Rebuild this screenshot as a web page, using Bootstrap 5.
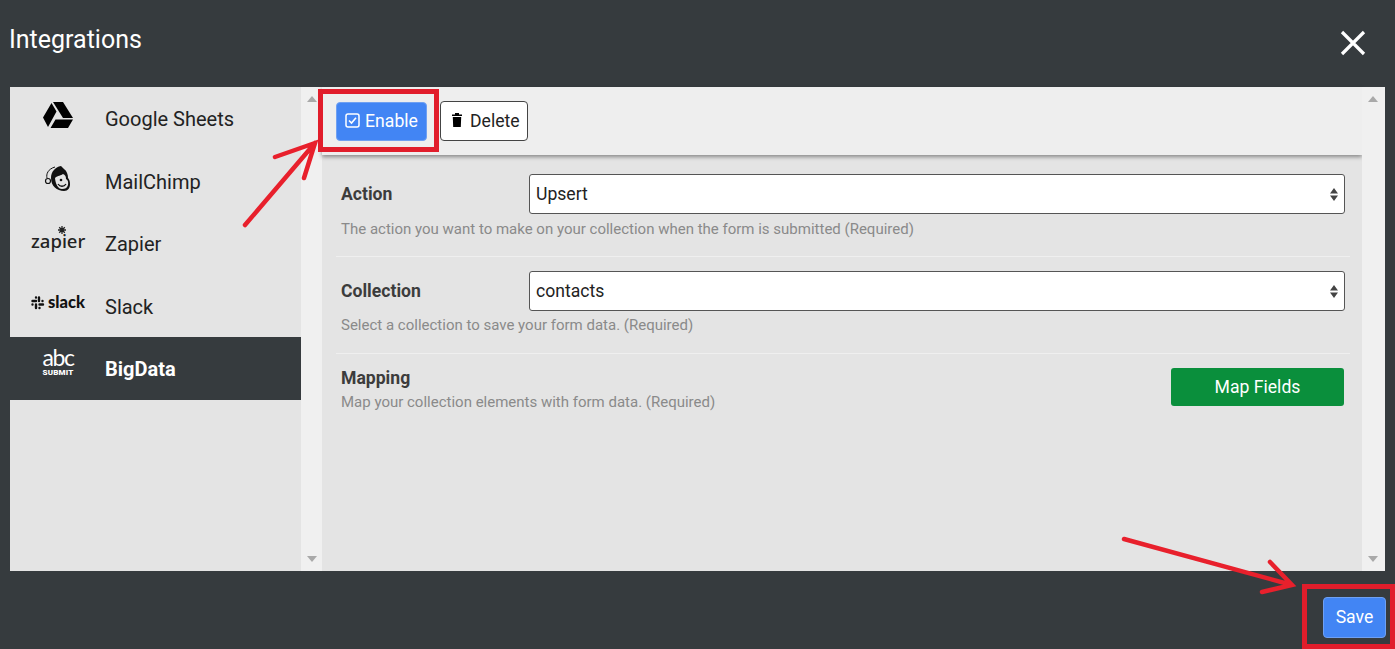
<!DOCTYPE html>
<html lang="en">
<head>
<meta charset="utf-8">
<title>Integrations</title>
<link rel="stylesheet" href="https://cdn.jsdelivr.net/npm/bootstrap@5.3.0/dist/css/bootstrap.min.css">
<style>
html,body{height:649px;overflow:hidden}
body{background:#363b3e;font-family:Roboto,"Liberation Sans",sans-serif;color:#222}
.stage{position:relative;width:1395px;height:649px}
.top-bar{height:87px;padding:0 29px 8px 9px}
.top-title{font-size:25px;font-weight:400;color:#fff;margin:0}
.close-x{background:none;border:0;padding:0;width:26px;height:26px;margin-top:6px;display:block}
.panel-wrap{height:484px;margin:0 10px;background:#f0f0f0}
.side-col{width:291px;background:#e4e4e4;flex:none}
.side-item{height:62.5px;color:#222;text-decoration:none;font-size:20px;padding-left:21px;padding-top:2px}
.side-item.is-on{background:#363b3e;color:#fff;font-weight:700}
.logo-box{width:54px;height:32px;margin-right:20px;position:relative;flex:none;margin-top:-8px}
.bar-col{width:21px;flex:none;background:#f0f0f0;position:relative}
.bar-up,.bar-down{position:absolute;left:6px;width:0;height:0;border-left:5px solid transparent;border-right:5px solid transparent}
.bar-up{top:9px;border-bottom:6px solid #a9a9a9}
.bar-down{bottom:9px;border-top:6px solid #a9a9a9}
.main-col{width:1040px;flex:none;background:#e4e4e4}
.tool-bar{height:68px;background:#eee;box-shadow:0 2px 4px rgba(0,0,0,.4);padding:14px 14px 0;gap:13px;position:relative}
.btn-blue{background:#4285f4;border:1px solid #6fa0f2;color:#fff;font-size:17.6px;height:40px;line-height:1;padding:0 8px;border-radius:4px}
.btn-white{background:#fff;border:1px solid #444;color:#222;font-size:17.6px;height:40px;line-height:1;padding:1px 8px 0 10px;border-radius:4px;width:88px;white-space:nowrap}
.tool-bar .btn-blue{width:91px;margin-top:1px;height:39px;white-space:nowrap}
.tool-bar .btn-blue svg{margin-right:5px;vertical-align:-1px}
.tool-bar .btn-white svg{margin-right:7px;vertical-align:0}
.form-area{padding:19px 12px 0 14px}
.set-row{border-bottom:1px solid #efefef;padding:0 5px}
.row-a{height:83px}
.row-a .set-help{margin-top:4px}
.row-b{height:97px;padding-top:14px}
.row-b .set-help{margin-top:3px}
.set-label{width:188px;font-size:17.6px;font-weight:700;color:#3c3c3c;flex:none;line-height:41px}
.set-select{font-family:Roboto,"Liberation Sans",sans-serif;font-size:17.6px;height:40px;border:1px solid #555;border-radius:3px;padding:0 6px;background-color:#fff;color:#222;flex:1;min-width:0;background-image:url("data:image/svg+xml,%3Csvg xmlns='http://www.w3.org/2000/svg' width='8' height='13'%3E%3Cpath d='M4 0 8 5.500H0zM4 13 0 7.500h8z' fill='%23444'/%3E%3C/svg%3E");background-position:right 6px center;background-size:8px 13px;box-shadow:none}
.set-help{font-size:15px;color:#8a8a8a;margin-top:4px;line-height:20px}
.map-row{padding:14px 0 0 5px}
.map-title{font-size:17.6px;font-weight:700;color:#3c3c3c;line-height:20px}
.map-btn{width:173px;height:38px;background:#0a8f3c;color:#fff;border:0;border-radius:3px;font-size:17.6px;line-height:1;padding:1px 0 0;margin-right:6px}
.foot-bar{padding:26px 9px 0 0}
.save-btn{width:63px;height:41px;padding:1px 0 0}
.mark-layer{position:absolute;left:0;top:0;pointer-events:none}
.zap-word{position:absolute;left:0;top:1px;font-family:"Noto Sans",sans-serif;font-size:18.500px;line-height:32px;color:#222;font-weight:500;width:54px;text-align:center}
.slack-word{position:absolute;left:17px;top:-1px;font-family:Lato,sans-serif;font-weight:900;font-size:16.500px;line-height:32px;color:#111}
.abc-word{position:absolute;left:0;width:54px;top:-1px;text-align:center;font-size:23px;line-height:19px;font-family:Lato,sans-serif;font-weight:400;letter-spacing:-1.500px;color:#fff}
.sub-word{position:absolute;left:0;width:54px;top:20px;text-align:center;font-size:8px;line-height:8px;font-weight:900;color:#fff;letter-spacing:.2px}
</style>
</head>
<body>
<div class="stage">
  <div class="top-bar d-flex justify-content-between align-items-center">
    <h1 class="top-title">Integrations</h1>
    <button class="close-x" type="button" aria-label="Close"><svg width="26" height="26" viewBox="0 0 26 26"><path d="M2 2 24 24M24 2 2 24" stroke="#fff" stroke-width="3.200"/></svg></button>
  </div>
  <div class="panel-wrap d-flex">
    <div class="side-col">
      <a class="side-item d-flex align-items-center" href="#"><span class="logo-box"><svg width="54" height="32" viewBox="0 -1 54 32"><path d="M22 1h10l10 16H32zM20.500 2 25.500 10.500 17 26 12 16.500zM19.500 27l5-8.500h17.500l-5 8.500z" fill="#000"/></svg></span>Google Sheets</a>
      <a class="side-item d-flex align-items-center" href="#"><span class="logo-box"><svg width="54" height="32" viewBox="0 0 54 32"><path d="M24 5C17 7 15 12 16 16" fill="none" stroke="#111" stroke-width="1"/><circle cx="17" cy="19" r="2.500" fill="#e4e4e4" stroke="#111" stroke-width="1.200"/><path d="M30 4C24 5 20 10 20 16 20 24 26 29 33 29 37 29 39 26 39 22 39 19 38 17 37 16 37 13 36 9 33 7Z" fill="#111"/><path d="M24 16C27 13 30 14 32 12 34 13 35 14 35 17 37 18 37.500 20 37 23 36 26 34 27 31 27 27 27 24.500 22 24 16Z" fill="#e4e4e4"/><circle cx="30" cy="18" r="1.300" fill="#111"/><path d="M27 22C29 25 33 25 35 22" fill="none" stroke="#111" stroke-width="1.300"/></svg></span>MailChimp</a>
      <a class="side-item d-flex align-items-center" href="#"><span class="logo-box"><span class="zap-word">zapier</span><svg class="mark-layer" width="54" height="32" viewBox="0 0 54 32"><circle cx="31" cy="6" r="2.200" fill="#e4e4e4"/><path d="M31 2v8M27 6h8M28.200 3.200l5.600 5.600M33.800 3.200l-5.600 5.600" stroke="#222" stroke-width="1.300"/></svg></span>Zapier</a>
      <a class="side-item d-flex align-items-center" href="#"><span class="logo-box"><svg class="mark-layer" width="54" height="32" viewBox="0 0 54 32"><g stroke="#111" stroke-width="2.400" stroke-linecap="round" fill="none"><path d="M1.500 14H5M8 10.500V14M8.500 17.500H12M5 17.500V21"/><path d="M5 10.500h.01M11.500 14h.01M8.500 21h.01M1.500 17.500h.01"/></g></svg><span class="slack-word">slack</span></span>Slack</a>
      <a class="side-item is-on d-flex align-items-center" href="#"><span class="logo-box"><span class="abc-word">abc</span><span class="sub-word">SUBMIT</span></span>BigData</a>
    </div>
    <div class="bar-col"><span class="bar-up"></span><span class="bar-down"></span></div>
    <div class="main-col">
      <div class="tool-bar d-flex align-items-start">
        <button class="btn-blue" type="button"><svg width="15" height="15" viewBox="0 0 15 15"><rect x="1" y="1" width="13" height="13" rx="2" fill="none" stroke="#fff" stroke-width="1.500"/><path d="M4 7.500 6.500 10 11 4.800" fill="none" stroke="#fff" stroke-width="1.600"/></svg>Enable</button>
        <button class="btn-white" type="button"><svg width="12" height="15" viewBox="0 0 12 15"><path d="M1 2.500h10V4H1zM4 1h4v1.500H4zM1.800 5h8.400l-.4 10H2.200z" fill="#000"/></svg>Delete</button>
      </div>
      <div class="form-area">
        <div class="set-row row-a">
          <div class="d-flex"><label class="set-label" for="actionSel">Action</label><select class="form-select set-select" id="actionSel"><option>Upsert</option></select></div>
          <div class="set-help">The action you want to make on your collection when the form is submitted (Required)</div>
        </div>
        <div class="set-row row-b">
          <div class="d-flex"><label class="set-label" for="collSel">Collection</label><select class="form-select set-select" id="collSel"><option>contacts</option></select></div>
          <div class="set-help">Select a collection to save your form data. (Required)</div>
        </div>
        <div class="map-row d-flex justify-content-between">
          <div><div class="map-title">Mapping</div><div class="set-help">Map your collection elements with form data. (Required)</div></div>
          <button class="map-btn" type="button">Map Fields</button>
        </div>
      </div>
    </div>
    <div class="bar-col flex-grow-1"><span class="bar-up"></span><span class="bar-down"></span></div>
  </div>
  <div class="foot-bar d-flex justify-content-end">
    <button class="btn-blue save-btn" type="button">Save</button>
  </div>
  <svg class="mark-layer" width="1395" height="649" viewBox="0 0 1395 649">
    <g fill="none" stroke="#e8202c" stroke-width="4.500" stroke-linecap="round">
      <path d="M245 225 315 143M275 157 315 143 304 178"/>
      <path d="M1124 539 1292 585M1270 562 1292 585 1262 592"/>
    </g>
    <g fill="none" stroke="#e11d2b" stroke-width="5">
      <rect x="320.500" y="91.500" width="116" height="58"/>
      <rect x="1304.500" y="586.500" width="88" height="60"/>
    </g>
  </svg>
</div>
</body>
</html>
